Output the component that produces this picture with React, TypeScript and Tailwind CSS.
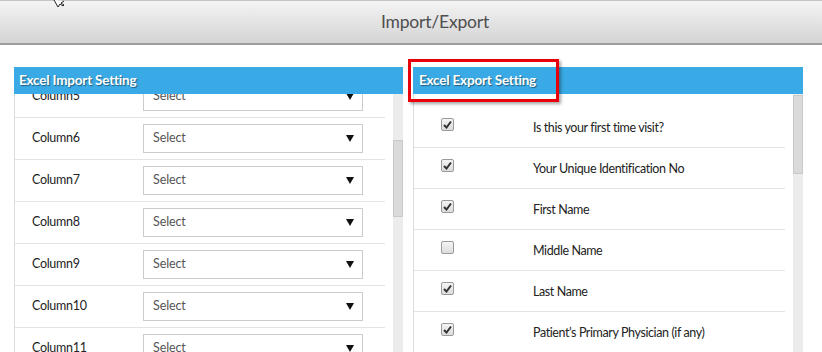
import React from "react";

const font = { fontFamily: "Lato, 'Open Sans', sans-serif" };

function Arrow() {
  return (
    <svg width="8" height="7" viewBox="0 0 8 7" className="block">
      <path d="M0 0 H8 L4 7 Z" fill="#111" />
    </svg>
  );
}

function Checkbox({ checked }: { checked: boolean }) {
  return (
    <div className="w-[13px] h-[13px] rounded-[2px] border border-[#9a9a9a] bg-gradient-to-b from-[#f4f4f4] to-[#dcdcdc] flex items-center justify-center">
      {checked && (
        <svg width="9" height="9" viewBox="0 0 9 9">
          <path d="M1 5 L3.5 7.5 L8 1.5" stroke="#333" strokeWidth="2" fill="none" />
        </svg>
      )}
    </div>
  );
}

const columns = ["Column5", "Column6", "Column7", "Column8", "Column9", "Column10", "Column11", "Column12"];
const fields: [string, boolean][] = [
  ["Is this your first time visit?", true],
  ["Your Unique Identification No", true],
  ["First Name", true],
  ["Middle Name", false],
  ["Last Name", true],
  ["Patient\u2019s Primary Physician (if any)", true],
];

export default function App() {
  return (
    <div className="relative w-[822px] h-[352px] overflow-hidden bg-white" style={font}>
      <div className="h-[45px] border-t border-[#c4c4c4] border-b-2 border-b-[#9c9c9c] bg-gradient-to-b from-[#f4f4f4] to-[#d4d4d4] flex items-center justify-center pl-[48px]">
        <span className="text-[17.5px] text-[#4f4f4f] leading-none tracking-[-0.2px]">Import/Export</span>
      </div>

      <div className="flex pt-[22px] pl-[14px] gap-[10px]">
        {/* Left panel */}
        <div className="w-[389px]">
          <div className="h-[27px] bg-[#39aae6] flex items-center pl-[5px]">
            <span className="text-white font-bold text-[13.5px] tracking-[-0.2px] [text-shadow:1px_1px_1px_rgba(0,0,0,0.45)]">Excel Import Setting</span>
          </div>
          <div className="flex h-[260px]">
            <div className="w-[371px] border-l border-[#dddddd] overflow-hidden">
              <div className="-mt-[18px]">
                {columns.map((c) => (
                  <div key={c} className="h-[42px] border-b border-[#e3e3e3] flex items-center">
                    <span className="w-[128px] pl-[17px] text-[12.5px] tracking-[-0.3px] text-[#222222]">{c}</span>
                    <div className="w-[220px] h-[29px] border border-[#cccccc] flex items-center justify-between pl-[9px] pr-[8px]">
                      <span className="text-[12.5px] tracking-[-0.1px] text-[#555555]">Select</span>
                      <Arrow />
                    </div>
                  </div>
                ))}
              </div>
            </div>
            <div className="ml-[8px] w-[10px] bg-[#ececec] pt-[46px]">
              <div className="h-[77px] bg-[#dadada] border border-[#c9c9c9]" />
            </div>
          </div>
        </div>

        {/* Right panel */}
        <div className="w-[390px]">
          <div className="h-[27px] bg-[#39aae6] flex items-center pl-[6px]">
            <span className="text-white font-bold text-[13.5px] tracking-[-0.2px] [text-shadow:1px_1px_1px_rgba(0,0,0,0.45)]">Excel Export Setting</span>
          </div>
          <div className="flex h-[260px]">
            <div className="w-[372px] border-l border-[#dddddd] overflow-hidden pt-[13px]">
              {fields.map(([f, c]) => (
                <div key={f} className="h-[41px] border-b border-[#e3e3e3] flex items-center">
                  <div className="ml-[27px] mb-[6px]">
                    <Checkbox checked={c} />
                  </div>
                  <span className="ml-[79px] mt-[2px] text-[12.5px] tracking-[-0.4px] text-[#222222]">{f}</span>
                </div>
              ))}
            </div>
            <div className="ml-[8px] w-[10px] bg-[#ececec] pt-[1px]">
              <div className="h-[79px] bg-[#dadada] border border-[#c9c9c9]" />
            </div>
          </div>
        </div>
      </div>

      {/* annotation box */}
      <div className="absolute left-[408px] top-[59px] w-[151px] h-[43px] border-[3px] border-[#e8000b] shadow-[2px_2px_3px_rgba(0,0,0,0.35)]" />

      {/* cursor */}
      <svg className="absolute left-[53px] top-0" width="12" height="8" viewBox="0 0 12 8">
        <path d="M1 0 L5 7 L7 4 L10 6 L11 5 L8 3 L11 1" fill="white" stroke="#222" strokeWidth="1" />
      </svg>
    </div>
  );
}
